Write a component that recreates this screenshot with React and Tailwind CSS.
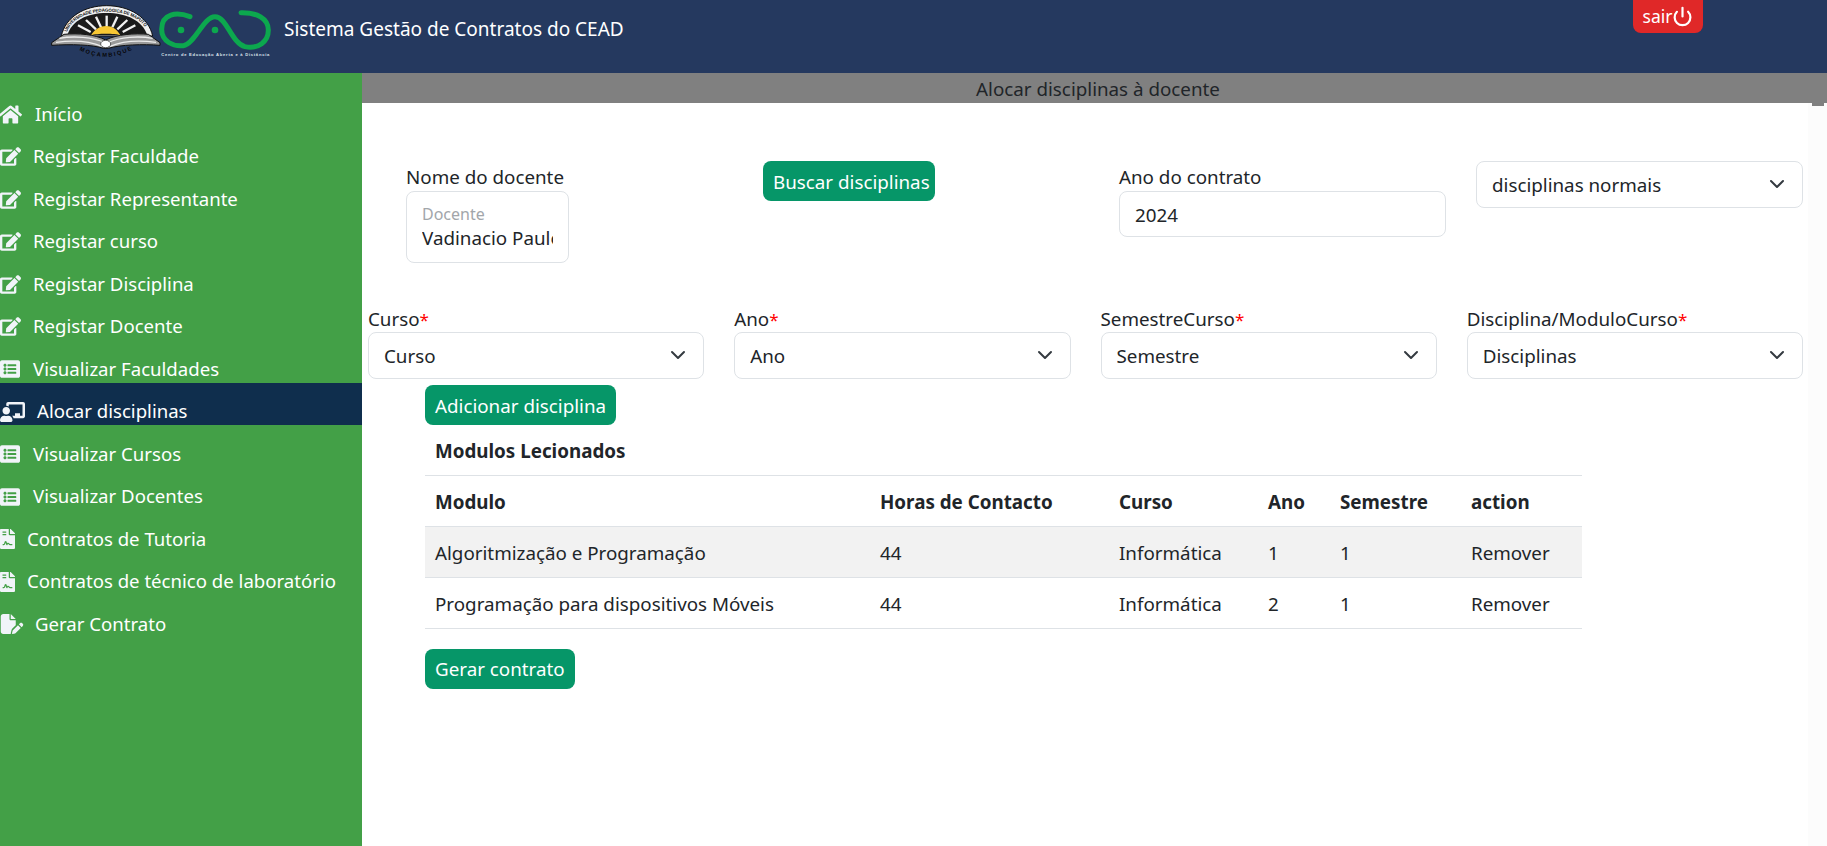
import React from "react";
import { FaHome, FaEdit, FaListAlt, FaChalkboardTeacher, FaFileContract } from "react-icons/fa";
import { FaFilePen } from "react-icons/fa6";
import { ChevronDown, Power } from "lucide-react";

const menu = [
    { label: "Início", icon: FaHome, iconSize: "w-[23px] h-[23px] -ml-[1px]", slot: "w-[35px]" },
    { label: "Registar Faculdade", icon: FaEdit, iconSize: "w-[21px] h-[21px]", slot: "w-[33px]" },
    { label: "Registar Representante", icon: FaEdit, iconSize: "w-[21px] h-[21px]", slot: "w-[33px]" },
    { label: "Registar curso", icon: FaEdit, iconSize: "w-[21px] h-[21px]", slot: "w-[33px]" },
    { label: "Registar Disciplina", icon: FaEdit, iconSize: "w-[21px] h-[21px]", slot: "w-[33px]" },
    { label: "Registar Docente", icon: FaEdit, iconSize: "w-[21px] h-[21px]", slot: "w-[33px]" },
    { label: "Visualizar Faculdades", icon: FaListAlt, iconSize: "w-[20px] h-[20px]", slot: "w-[33px]" },
    { label: "Alocar disciplinas", icon: FaChalkboardTeacher, iconSize: "w-[25px] h-[20px]", slot: "w-[37px]", active: true },
    { label: "Visualizar Cursos", icon: FaListAlt, iconSize: "w-[20px] h-[20px]", slot: "w-[33px]" },
    { label: "Visualizar Docentes", icon: FaListAlt, iconSize: "w-[20px] h-[20px]", slot: "w-[33px]" },
    { label: "Contratos de Tutoria", icon: FaFileContract, iconSize: "w-[15px] h-[20px]", slot: "w-[27px]" },
    { label: "Contratos de técnico de laboratório", icon: FaFileContract, iconSize: "w-[15px] h-[20px]", slot: "w-[27px]" },
    { label: "Gerar Contrato", icon: FaFilePen, iconSize: "w-[24px] h-[20px]", slot: "w-[35px]" },
];

const modulos = [
    { nome: "Algoritmização e Programação", horas: 44, curso: "Informática", ano: 1, semestre: 1 },
    { nome: "Programação para dispositivos Móveis", horas: 44, curso: "Informática", ano: 2, semestre: 1 },
];

const Logos = () => (
    <svg viewBox="0 0 720 210" className="w-[240px] h-[70px] shrink-0">
        {/* seal */}
        <path d="M64 108 C76 52 132 17 200 17 C268 17 326 52 338 108 Z" fill="#f0f0f0" stroke="#111" strokeWidth="3" />
        <path id="seal-ring" d="M80 100 C92 58 140 35 200 35 C262 35 310 58 324 100" fill="none" />
        <text fontFamily="'Liberation Sans', sans-serif" fontSize="13.5" fontWeight="700" fill="#111">
            <textPath href="#seal-ring" startOffset="4" textLength="270">UNIVERSIDADE PEDAGÓGICA DE MAPUTO</textPath>
        </text>
        <path d="M82 106 C94 62 142 39 200 39 C260 39 308 62 322 106 Z" fill="#1a1a1a" />
        <g stroke="#f2f2f2" strokeWidth="7">
            <path d="M200 80 L200 47" />
            <path d="M183 82 L168 50" />
            <path d="M217 82 L232 50" />
            <path d="M168 88 L138 60" />
            <path d="M232 88 L262 60" />
            <path d="M152 96 L114 76" />
            <path d="M248 96 L286 76" />
        </g>
        <path d="M153 106 C165 86 182 78 198 78 C216 78 230 86 241 106 C225 100 170 100 153 106 Z" fill="#f9c834" />
        <path d="M35 128 L72 103 C115 99 165 103 197 120 C230 103 285 99 325 103 L360 128 L360 136 C310 132 240 134 205 145 L190 145 C160 134 90 132 35 136 Z" fill="#9a9a9a" stroke="#101010" strokeWidth="3" />
        <path d="M58 115 C100 107 160 111 194 128 M48 127 C100 120 150 124 186 139 M338 115 C295 107 240 111 204 128 M348 127 C295 120 245 124 210 139" fill="none" stroke="#ececec" strokeWidth="4" />
        <ellipse cx="197" cy="132" rx="15" ry="11" fill="#fff" stroke="#222" strokeWidth="2" />
        <path id="seal-curve" d="M118 150 Q197 192 278 148" fill="none" />
        <text fontFamily="'Liberation Sans', sans-serif" fontSize="17" fontWeight="700" fill="#050505">
            <textPath href="#seal-curve" textLength="165">MOÇAMBIQUE</textPath>
        </text>
        {/* CEAD mark */}
        <path d="M450 50 C410 35 365 40 365 88 C365 125 400 140 430 137 C465 132 490 50 525 50 C560 50 575 130 615 140 C655 148 685 125 685 90 C685 55 650 37 603 38" fill="none" stroke="#0ca84e" strokeWidth="15" strokeLinecap="round" />
        <circle cx="423" cy="90" r="10" fill="#0ca84e" />
        <circle cx="525" cy="90" r="10" fill="#0ca84e" />
        <text x="364" y="167" fontFamily="'Liberation Sans', sans-serif" fontSize="12.5" fontWeight="700" fill="#dfe4ec" textLength="324">Centro de Educação Aberta e à Distância</text>
    </svg>
);

const Select = ({ label, value, required, className = "" }) => (
    <div className={className}>
        {label && (
            <label className="block h-[26px] leading-[26px] text-[#212529]">
                {label}{required && <span className="text-[17px] leading-[17px] text-[#ff0000]">*</span>}
            </label>
        )}
        <div className="relative">
            <select defaultValue={value} className="w-full h-[47px] pl-[15px] pr-[40px] pt-[2px] appearance-none rounded-lg border border-[#dee2e6] bg-white text-[#212529]">
                <option>{value}</option>
            </select>
            <ChevronDown className="absolute right-[14px] top-[11px] w-[24px] h-[24px] text-[#343a40] pointer-events-none" strokeWidth={2} />
        </div>
    </div>
);

const GreenButton = ({ children, className = "" }) => (
    <button className={`h-[40px] px-[10px] pt-[2px] rounded-lg bg-[#069668] text-white ${className}`}>{children}</button>
);

export default function App() {
    return (
        <div className="h-screen flex flex-col overflow-hidden font-['Noto_Sans',sans-serif] text-[18.8px] bg-white">
            <header className="h-[73px] shrink-0 flex justify-between items-start bg-[#25395f] pl-[40px] pr-[124px]">
                <div className="flex items-start">
                    <Logos />
                    <span className="ml-[4px] mt-[15px] text-[19px] text-white">Sistema Gestão de Contratos do CEAD</span>
                </div>
                <button className="h-[33px] w-[70px] flex items-center justify-center rounded-b-lg bg-[#e02828] text-white text-[17.5px]">
                    sair<Power className="w-[21px] h-[21px]" strokeWidth={2.5} />
                </button>
            </header>

            <div className="flex flex-1 min-h-0">
                <aside className="w-[362px] shrink-0 bg-[#43a047] pt-[12px] text-white text-[18.6px]">
                    {menu.map((item) => {
                        const Icon = item.icon;
                        return (
                            <div key={item.label} className={`h-[42.5px] flex items-end leading-[28px] ${item.active ? "bg-[#0f2e4d]" : ""}`}>
                                <span className={`${item.slot} h-[27px] flex items-center shrink-0`}>
                                    <Icon className={`${item.iconSize} text-[#f1f4f9]`} />
                                </span>
                                <span>{item.label}</span>
                            </div>
                        );
                    })}
                </aside>

                <main className="flex-1 min-w-0 flex flex-col">
                    <div className="h-[30px] shrink-0 bg-[#808080] text-center pl-[7px] pt-[1px] leading-[30px] text-[#212529]">Alocar disciplinas à docente</div>
                    <div className="flex flex-1 min-h-0">
                        <div className="flex-1 min-w-0 text-[#212529]">
                            <div className="flex items-start mt-[58px]">
                                <div className="ml-[44px] w-[163px] mt-[3px] shrink-0">
                                    <label className="block leading-[27px] whitespace-nowrap">Nome do docente</label>
                                    <div className="h-[72px] rounded-lg border border-[#dee2e6] px-[15px] pt-[12px]">
                                        <div className="text-[16px] leading-[20px] text-[#a2a6aa]">Docente</div>
                                        <input readOnly value="Vadinacio Paulo" className="w-full leading-[27px] outline-none" />
                                    </div>
                                </div>
                                <GreenButton className="ml-[194px] w-[172px] shrink-0 whitespace-nowrap px-0">Buscar disciplinas</GreenButton>
                                <div className="ml-[184px] w-[327px] mt-[3px] shrink-0">
                                    <label className="block leading-[27px]">Ano do contrato</label>
                                    <input readOnly value="2024" className="w-full h-[46px] px-[15px] pt-[1px] rounded-lg border border-[#dee2e6] outline-none" />
                                </div>
                                <Select value="disciplinas normais" className="ml-[30px] w-[327px] shrink-0" />
                            </div>

                            <div className="grid grid-cols-4 gap-x-[30px] w-[1435px] ml-[6px] mt-[43px]">
                                <Select label="Curso" value="Curso" required />
                                <Select label="Ano" value="Ano" required />
                                <Select label="SemestreCurso" value="Semestre" required />
                                <Select label="Disciplina/ModuloCurso" value="Disciplinas" required />
                            </div>

                            <div className="ml-[63px] w-[1157px] mt-[6px]">
                                <GreenButton>Adicionar disciplina</GreenButton>
                                <table className="w-full table-fixed mt-[2px] text-left">
                                    <colgroup>
                                        <col className="w-[445px]" />
                                        <col className="w-[239px]" />
                                        <col className="w-[149px]" />
                                        <col className="w-[72px]" />
                                        <col className="w-[131px]" />
                                        <col />
                                    </colgroup>
                                    <thead>
                                        <tr className="h-[48px] border-b border-[#dee2e6]">
                                            <th colSpan={6} className="px-[10px] font-bold">Modulos Lecionados</th>
                                        </tr>
                                        <tr className="h-[51px] border-b border-[#dee2e6] font-bold">
                                            {["Modulo", "Horas de Contacto", "Curso", "Ano", "Semestre", "action"].map((h) => (
                                                <th key={h} className="px-[10px] pt-[3px]">{h}</th>
                                            ))}
                                        </tr>
                                    </thead>
                                    <tbody>
                                        {modulos.map((m, i) => (
                                            <tr key={m.nome} className={`h-[51px] border-b border-[#dee2e6] ${i === 0 ? "bg-[#f2f2f2]" : ""}`}>
                                                <td className="px-[10px] pt-[3px]">{m.nome}</td>
                                                <td className="px-[10px] pt-[3px]">{m.horas}</td>
                                                <td className="px-[10px] pt-[3px]">{m.curso}</td>
                                                <td className="px-[10px] pt-[3px]">{m.ano}</td>
                                                <td className="px-[10px] pt-[3px]">{m.semestre}</td>
                                                <td className="px-[10px] pt-[3px]">Remover</td>
                                            </tr>
                                        ))}
                                    </tbody>
                                </table>
                                <GreenButton className="mt-[20px]">Gerar contrato</GreenButton>
                            </div>
                        </div>
                        {/* page scrollbar strip */}
                        <div className="w-[19px] shrink-0 bg-[#fcfcfc] pl-[4px]">
                            <div className="w-[12px] h-[3px] bg-[#808080]"></div>
                        </div>
                    </div>
                </main>
            </div>
        </div>
    );
}
